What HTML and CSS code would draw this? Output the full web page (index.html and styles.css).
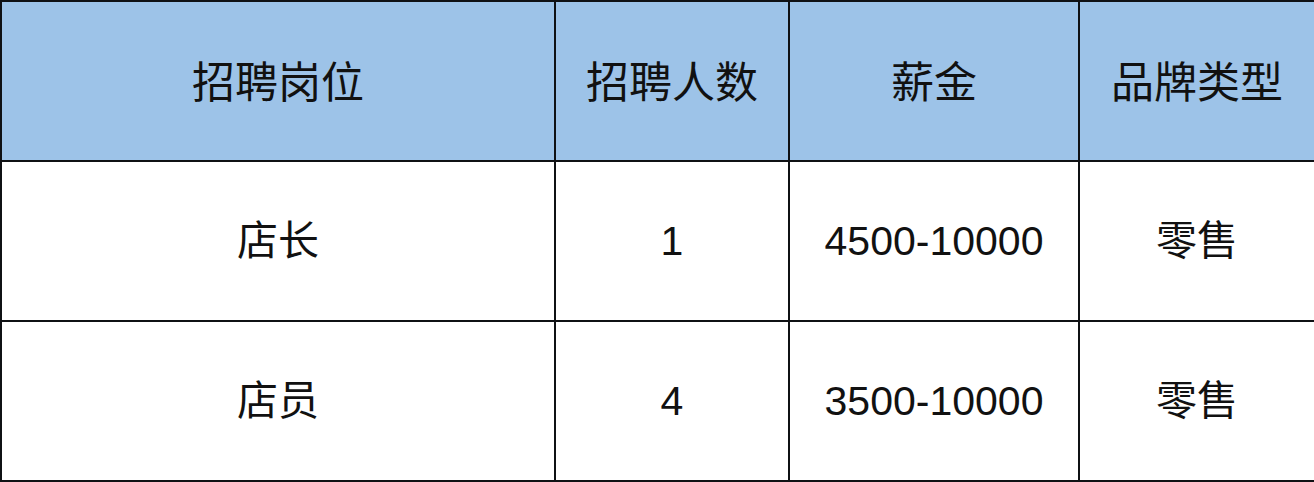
FILE: index.html
```html
<!DOCTYPE html>
<html lang="zh-CN">
<head>
<meta charset="utf-8">
<title>招聘信息</title>
<link rel="stylesheet" href="styles.css">
</head>
<body>
<div class="table">
  <div class="cell head">招聘岗位</div>
  <div class="cell head">招聘人数</div>
  <div class="cell head">薪金</div>
  <div class="cell head">品牌类型</div>

  <div class="cell">店长</div>
  <div class="cell">1</div>
  <div class="cell">4500-10000</div>
  <div class="cell">零售</div>

  <div class="cell">店员</div>
  <div class="cell">4</div>
  <div class="cell">3500-10000</div>
  <div class="cell">零售</div>
</div>
</body>
</html>
```

FILE: styles.css
```css
html, body {
  margin: 0;
  padding: 0;
  background: #ffffff;
}

.table {
  width: 1314px;
  height: 482px;
  box-sizing: border-box;
  display: grid;
  grid-template-columns: 552px 232px 288px 1fr;
  grid-template-rows: 158px 158px 158px;
  gap: 2px;
  padding: 2px 0 2px 2px;
  background: #0f1114;
}

.cell {
  display: flex;
  align-items: center;
  justify-content: center;
  background: #ffffff;
  color: #111111;
  font-family: "Liberation Sans", "Noto Sans CJK SC", sans-serif;
  font-size: 41px;
  line-height: 1;
}

.head {
  background: #9dc3e8;
  font-size: 43px;
  padding-top: 4px;
}
```
